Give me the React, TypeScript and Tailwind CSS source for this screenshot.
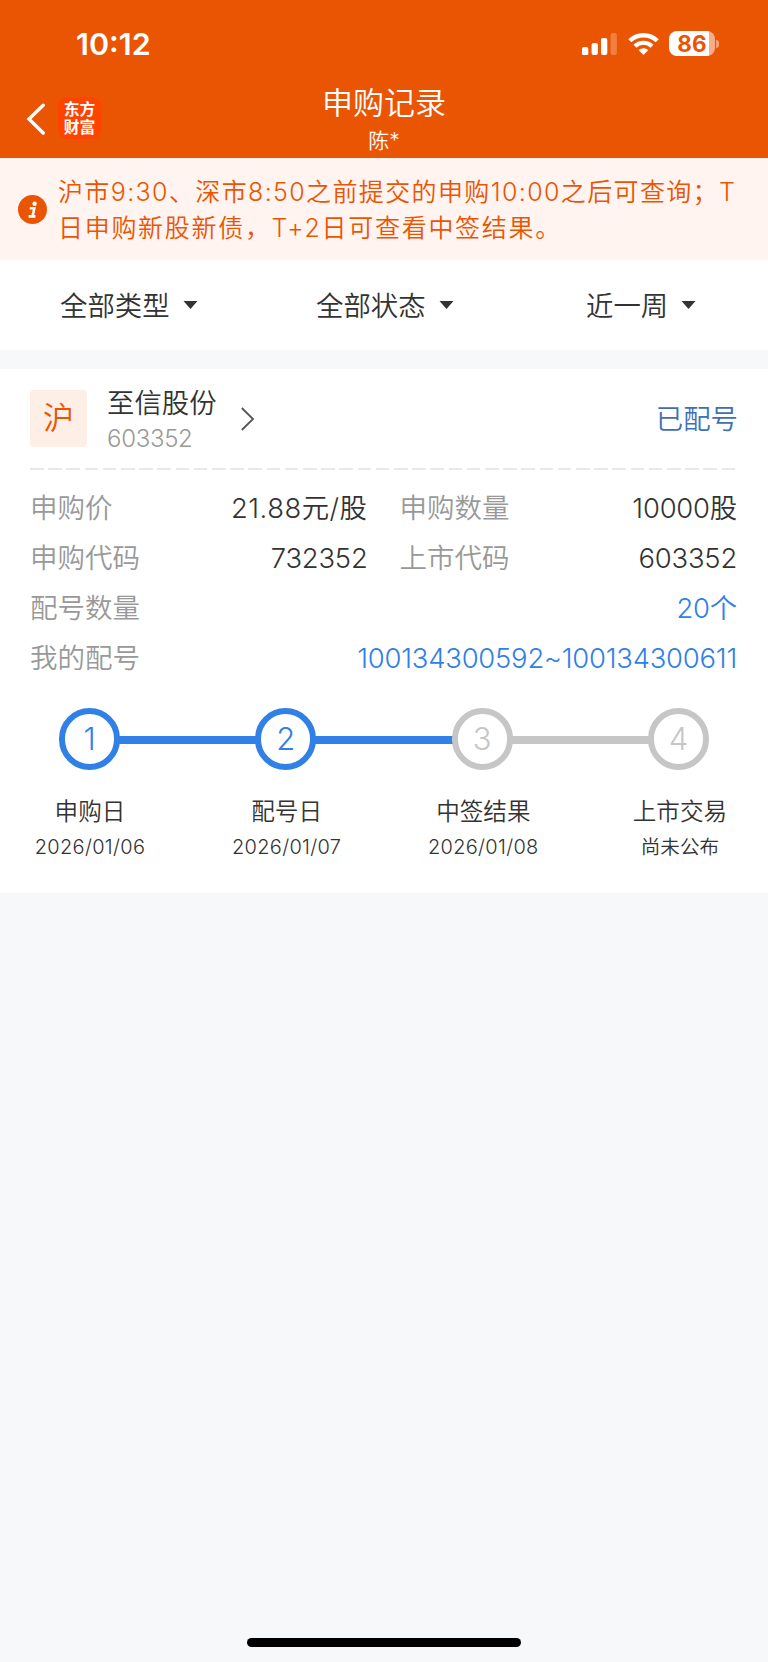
import React from "react";

const steps = [
  { n: 1, label: "申购日", date: "2026/01/06", on: true },
  { n: 2, label: "配号日", date: "2026/01/07", on: true },
  { n: 3, label: "中签结果", date: "2026/01/08", on: false },
  { n: 4, label: "上市交易", date: "尚未公布", on: false },
];

function StatusBar() {
  return (
    <div className="flex h-[88px] items-start justify-between pt-[29px] pr-[49px] pl-[76px]">
      <span className="text-[30.5px] leading-[30px] font-semibold">10:12</span>
      <div className="flex items-center pt-[2px]">
        <svg width="36" height="23" viewBox="0 0 36 23" fill="#fff">
          <rect x="0" y="15" width="6.3" height="8.3" rx="2" />
          <rect x="9.6" y="11" width="6.3" height="12" rx="2" />
          <rect x="19" y="6" width="6.3" height="17" rx="2" />
          <rect x="28.6" y="1" width="6.3" height="22" rx="2" opacity="0.25" />
        </svg>
        <svg className="ml-[10px]" width="31" height="23" viewBox="0 0 31 23" fill="none" stroke="#fff">
          <path d="M1.8 8.8 A19.5 19.5 0 0 1 29.2 8.8" strokeWidth="4.4" />
          <path d="M7 14.2 A12.2 12.2 0 0 1 24 14.2" strokeWidth="4.2" />
          <path d="M15.5 23 L10.6 18 A7.4 7.4 0 0 1 20.4 18 Z" fill="#fff" stroke="none" />
        </svg>
        <div className="ml-[10px] flex h-[25px] w-[46px] items-center justify-center rounded-[8px] bg-[linear-gradient(90deg,#fff_0_40px,#f7ae87_40px)] pb-px text-[22.5px] leading-[25px] font-bold tracking-[0.2px] text-[#ea5504]">
          86
        </div>
        <div className="ml-px h-[8px] w-[3px] rounded-r-full bg-[#f4a073]" />
      </div>
    </div>
  );
}

function Filter({ text, className }: { text: string; className: string }) {
  return (
    <div className={"flex items-center " + className}>
      <span className="pt-[2px] text-[27.4px] leading-[40px]">{text}</span>
      <svg className="ml-[13px]" width="15" height="8" viewBox="0 0 15 8" fill="#333">
        <path d="M0.5 0H14.5L7.5 8Z" />
      </svg>
    </div>
  );
}

type CellProps = { label: string; value: string; blue?: boolean; wide?: boolean; className?: string };

function Cell({ label, value, blue, wide, className = "" }: CellProps) {
  return (
    <div className={"flex h-[50px] items-center justify-between " + className}>
      <span className="text-[27.5px] leading-[40px] text-[#999]">{label}</span>
      <span
        className={
          "text-[27.4px] leading-[40px] " +
          (wide ? "tracking-[0.5px] " : "tracking-[-0.2px] ") +
          (blue ? "text-[#3080e6]" : "text-[#333]")
        }
      >
        {value}
      </span>
    </div>
  );
}

export default function App() {
  return (
    <div className="flex h-[1662px] w-[768px] flex-col overflow-hidden bg-[#f7f8fa] font-['Inter','Noto_Sans_CJK_SC',sans-serif] font-[350] text-[#333]">
      <header className="h-[158px] bg-[#ea5504] text-white">
        <StatusBar />
        <div className="flex h-[70px]">
          <div className="flex w-[264px] items-start pt-[9px] pl-[26px]">
            <svg className="mt-[6px]" width="20" height="32" viewBox="0 0 20 32" fill="none" stroke="#fff" strokeWidth="3.4" strokeLinecap="round">
              <path d="M17.2 2.2L3 16L17.2 30" />
            </svg>
            <div className="ml-[12px] flex h-[42px] w-[43px] items-center justify-center rounded-[9px] bg-[#ff4300] pb-px font-['Noto_Sans_CJK_SC',sans-serif] text-[15.8px] leading-[18px] font-bold">
              <p>
                东方
                <br />
                财富
              </p>
            </div>
          </div>
          <div className="flex w-[240px] flex-col items-center">
            <span className="text-[31px] leading-[30px]">申购记录</span>
            <span className="mt-[12px] text-[21px] leading-[22px]">陈*</span>
          </div>
        </div>
      </header>

      <div className="flex h-[102px] items-center bg-[#fff4ef] pl-[18px] text-[#ea5504]">
        <svg width="29" height="29" viewBox="0 0 29 29">
          <circle cx="14.5" cy="14.5" r="14.5" fill="#ea5504" />
          <circle cx="16.6" cy="8.8" r="2.2" fill="#fff" />
          <path d="M11.8 13.2H16.3L14.6 21.3M10.6 21.4H17.4" fill="none" stroke="#fff" strokeWidth="2.6" />
        </svg>
        <div className="ml-[11px] pt-[2px] text-[25px] leading-[36px] whitespace-nowrap">
          <div className="tracking-[1.37px]">沪市9:30、深市8:50之前提交的申购10:00之后可查询；T</div>
          <div className="tracking-[1.7px]">日申购新股新债，T+2日可查看中签结果。</div>
        </div>
      </div>

      <div className="flex h-[90px] items-center bg-white">
        <Filter text="全部类型" className="w-[256px] pl-[60px]" />
        <Filter text="全部状态" className="w-[256px] pl-[60px]" />
        <Filter text="近一周" className="w-[256px] pl-[74px]" />
      </div>

      <main className="mt-[19px] h-[524px] bg-white">
        <div className="flex h-[99px] items-start px-[30px] pt-[21px]">
          <div className="flex h-[57px] w-[57px] items-center justify-center rounded-[4px] bg-[#fdeee6] pb-[2px] text-[31px] leading-[40px] text-[#ea5504]">沪</div>
          <div className="-mt-[4px] ml-[20px] flex w-[113px] flex-col">
            <span className="text-[27.4px] leading-[34px]">至信股份</span>
            <span className="mt-px text-[24px] leading-[36px] tracking-[-0.3px] text-[#999]">603352</span>
          </div>
          <svg className="mt-[16px] ml-[20px]" width="16" height="26" viewBox="0 0 16 26" fill="none" stroke="#555" strokeWidth="1.8">
            <path d="M1.8 2L13 13L1.8 24" />
          </svg>
          <span className="mt-[9px] ml-auto text-[27.4px] leading-[40px] text-[#3f70b5]">已配号</span>
        </div>
        <div className="ml-[30px] h-[2px] w-[705px] bg-[repeating-linear-gradient(90deg,#e8e8e8_0_13.6px,transparent_13.6px_18.2px)]" />

        <div className="grid grid-cols-2 gap-x-[32px] pt-[13px] pr-[31px] pl-[30px]">
          <Cell label="申购价" value="21.88元/股" wide />
          <Cell label="申购数量" value="10000股" />
          <Cell label="申购代码" value="732352" />
          <Cell label="上市代码" value="603352" />
          <Cell label="配号数量" value="20个" blue className="col-span-2" />
          <Cell label="我的配号" value="100134300592~100134300611" blue className="col-span-2" />
        </div>

        <div className="flex px-[59px] pt-[25px]">
          {steps.map((s, i) => (
            <React.Fragment key={s.n}>
              {i > 0 && <div className={"mx-[-1px] mt-[28px] h-[8px] flex-1 " + (i < 3 ? "bg-[#3080e6]" : "bg-[#c6c6c6]")} />}
              <div className={"flex h-[62px] w-[61px] shrink-0 items-center justify-center rounded-full border-[6px] bg-white text-[31px] leading-[40px] font-light " + (s.on ? "border-[#3080e6] text-[#3080e6]" : "border-[#c6c6c6] text-[#c6c6c6]")}>
                {s.n}
              </div>
            </React.Fragment>
          ))}
        </div>
        <div className="flex justify-between pt-[26px] pr-[18px] pl-[20px]">
          {steps.map((s) => (
            <div key={s.n} className="flex w-[140px] flex-col items-center whitespace-nowrap">
              <span className="text-[23.6px] leading-[32px]">{s.label}</span>
              <span className={"mt-[3px] leading-[32px] " + (s.n < 4 ? "text-[20px] tracking-[0.3px]" : "text-[19.6px]")}>{s.date}</span>
            </div>
          ))}
        </div>
      </main>

      <div className="mx-auto mt-auto mb-[15px] h-[9px] w-[274px] rounded-full bg-black" />
    </div>
  );
}
